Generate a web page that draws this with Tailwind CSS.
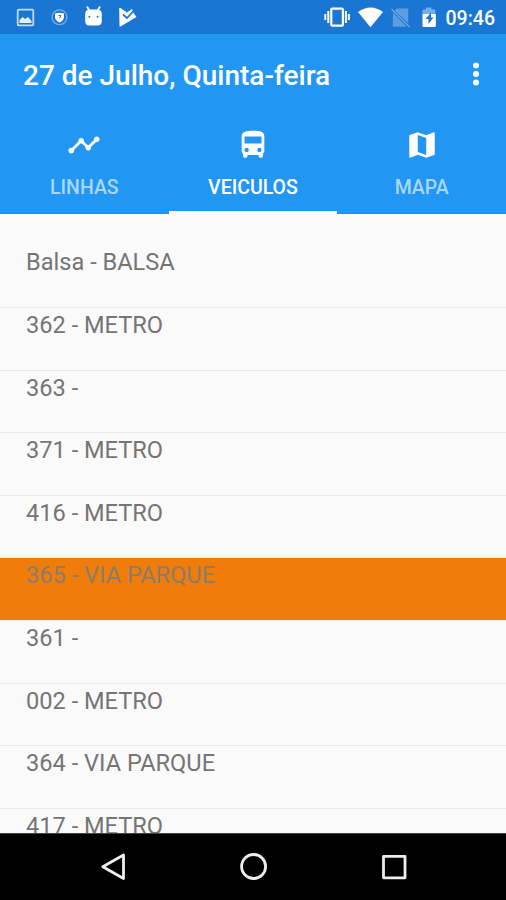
<!DOCTYPE html>
<html lang="pt"><head><meta charset="utf-8"><title>Veiculos</title>
<script src="https://cdn.jsdelivr.net/npm/@tailwindcss/browser@4"></script></head>
<body class="bg-[#fafafa]">
<div class="w-[506px] h-[900px] flex flex-col overflow-hidden font-[Roboto,sans-serif]">
<header class="h-[34px] shrink-0 bg-[#1976d2] flex items-center justify-between text-white">
<svg class="w-[160px] h-[34px]" viewBox="0 0 160 34" fill="none">
<g opacity=".9"><rect x="17.700" y="9.700" width="15.600" height="15.600" rx="1" stroke="#d5e5f8" stroke-width="1.800"/><path d="M19.500 23v-3l3-3 2.500 2 3-2 3.500 4v2z" fill="#fff"/></g>
<circle cx="59.500" cy="17.300" r="7.400" stroke="#77aee8" stroke-width="1.300"/><path d="M55 13.500q4.500-1.500 9 0v4q-.7 3.500-4.500 5-3.800-1.500-4.500-5z" fill="#fff"/><path d="M58.500 15.500h2.500l-1.500 3" stroke="#1976d2"/>
<path d="M87 6.500l3 5M100 6.500l-3 5" stroke="#fff" stroke-width="1.800"/><path d="M85.200 14q0-4.500 4.500-4.500h7.600q4.500 0 4.500 4.500v7q0 4.500-4.500 4.500h-7.600q-4.500 0-4.500-4.500z" fill="#fff"/><circle cx="89.400" cy="16.800" r="1" fill="#1976d2"/><circle cx="97.600" cy="16.800" r="1" fill="#1976d2"/>
<path d="M119.200 8.500q.2-1 1.300-.5l6.500 4.500 5-3.500 1.500 4 3 4-16 9.500q-1 .5-1-.7z" fill="#fff"/><path d="M123 14.500l4 3.500 7-7.500" stroke="#1976d2" stroke-width="1.700"/>
</svg>
<div class="flex items-center"><svg class="w-[122px] h-[34px]" viewBox="322 0 122 34" fill="none">
<rect x="331.300" y="8.700" width="11.600" height="17" rx="1" stroke="#fff" stroke-width="2.200"/><path d="M328.300 11v12M345.900 11v12" stroke="#fff" stroke-width="2"/><path d="M325.300 14v6M348.900 14v6" stroke="#fff" stroke-width="2"/>
<path d="M358 12q12.500-9 25 0L370.500 27.300z" fill="#fff"/>
<path d="M397 8.500h10q1.300 0 1.300 1.300v13.500L394.500 10.500zM393 12.500l13.500 14.200H393.800q-1 0-1-1z" fill="#5d9ee2"/><path d="M391.500 9l18 18" stroke="#70aae6" stroke-width="1.300"/>
<path d="M422.500 15V10.500q0-1 1-1h2.500V7.500h5.500v2h2.500q1.300 0 1.300 1V15z" fill="#76aeea"/><path d="M422.500 14h13.300v11.800q0 1.200-1.200 1.200h-10.900q-1.200 0-1.200-1.200z" fill="#fff"/><path d="M431 12.500l-5.500 6.500h3v5l5-6.500h-2.500z" fill="#1976d2"/>
</svg><span class="w-[62px] text-[19.500px] leading-[34px] font-medium whitespace-nowrap pt-[3px] pl-[1.500px]">09:46</span></div>
</header>
<section class="h-[180px] shrink-0 bg-[#2196f3] text-white flex flex-col">
<div class="h-[80px] flex items-center justify-between pl-[23px] pr-[25px] pt-[3px]">
<h1 class="text-[28px] leading-[32px] font-medium whitespace-nowrap">27 de Julho, Quinta-feira</h1>
<svg class="w-[10px] h-[26px] -mt-[4px]" viewBox="0 0 10 26" fill="#fff"><circle cx="5" cy="4.500" r="3"/><circle cx="5" cy="13" r="3"/><circle cx="5" cy="21.500" r="3"/></svg>
</div>
<nav class="grid grid-cols-3 h-[100px] text-[19.500px] leading-[22px] font-medium text-center">
<div class="flex flex-col items-center pt-[14px] border-b border-[#1e8dea]"><svg class="w-[34px] h-[34px] mb-[15px]" viewBox="0 0 24 24" fill="#fff"><path d="M23 8c0 1.100-.9 2-2 2-.18 0-.35-.02-.51-.07l-3.560 3.550c.05.16.07.34.07.52 0 1.100-.9 2-2 2s-2-.9-2-2c0-.18.02-.36.07-.52l-2.550-2.550c-.16.05-.34.07-.52.07s-.36-.02-.52-.07l-4.550 4.560c.05.16.07.33.07.51 0 1.100-.9 2-2 2s-2-.9-2-2 .9-2 2-2c.18 0 .35.02.51.07l4.560-4.550C8.020 9.360 8 9.180 8 9c0-1.100.9-2 2-2s2 .9 2 2c0 .18-.02.36-.07.52l2.550 2.550c.16-.05.34-.07.52-.07s.36.02.52.07l3.550-3.560C19.020 8.350 19 8.180 19 8c0-1.100.9-2 2-2s2 .9 2 2z"/></svg><span class="text-[#a9d6fb]">LINHAS</span></div>
<div class="flex flex-col items-center pt-[14px] border-b-[3px] border-[#fafafa]"><svg class="w-[34px] h-[34px] mb-[15px]" viewBox="0 0 24 24" fill="#fff"><path d="M4 16c0 .88.39 1.670 1 2.220V20c0 .55.45 1 1 1h1c.55 0 1-.45 1-1v-1h8v1c0 .55.45 1 1 1h1c.55 0 1-.45 1-1v-1.780c.61-.55 1-1.340 1-2.220V6c0-3.500-3.580-4-8-4s-8 .5-8 4v10zm3.500 1c-.83 0-1.500-.67-1.500-1.500S6.670 14 7.500 14s1.500.67 1.500 1.500S8.330 17 7.500 17zm9 0c-.83 0-1.500-.67-1.500-1.500s.67-1.500 1.500-1.500 1.500.67 1.500 1.500-.67 1.500-1.500 1.500zm1.500-6H6V6h12v5z"/></svg><span>VEICULOS</span></div>
<div class="flex flex-col items-center pt-[14px] border-b border-[#1e8dea]"><svg class="w-[34px] h-[34px] mb-[15px]" viewBox="0 0 24 24" fill="#fff"><path d="M20.500 3l-.16.03L15 5.100 9 3 3.360 4.900c-.21.07-.36.25-.36.48V20.500c0 .28.22.5.5.5l.16-.03L9 18.900l6 2.100 5.640-1.900c.21-.07.36-.25.36-.48V3.500c0-.28-.22-.5-.5-.5zM15 19l-6-2.110V5l6 2.110V19z"/></svg><span class="text-[#a9d6fb]">MAPA</span></div>
</nav>
</section>
<main class="flex-1 min-h-0 overflow-hidden bg-[#fafafa] text-[#757575] text-[23.600px] leading-[28px] whitespace-nowrap">
<div class="h-[94px] pt-[34px] pl-[26px] border-b border-[#e8e8e8]">Balsa - BALSA</div>
<div class="h-[62.600px] pt-[3px] pl-[26px] border-b border-[#e8e8e8]">362 - METRO</div>
<div class="h-[62.600px] pt-[3px] pl-[26px] border-b border-[#e8e8e8]">363 -</div>
<div class="h-[62.600px] pt-[3px] pl-[26px] border-b border-[#e8e8e8]">371 - METRO</div>
<div class="h-[62.600px] pt-[3px] pl-[26px] border-b border-[#e8e8e8]">416 - METRO</div>
<div class="h-[62.600px] pt-[3px] pl-[26px] border-b border-[#e8e8e8] bg-[#f07c0a] text-[#8b7d6d]">365 - VIA PARQUE</div>
<div class="h-[62.600px] pt-[3px] pl-[26px] border-b border-[#e8e8e8]">361 -</div>
<div class="h-[62.600px] pt-[3px] pl-[26px] border-b border-[#e8e8e8]">002 - METRO</div>
<div class="h-[62.600px] pt-[3px] pl-[26px] border-b border-[#e8e8e8]">364 - VIA PARQUE</div>
<div class="h-[62.600px] pt-[3px] pl-[26px]">417 - METRO</div>
</main>
<footer class="h-[67px] shrink-0 bg-black border-t border-[#444] flex justify-center">
<svg class="w-[506px] h-[66px]" viewBox="0 834 506 66" fill="none" stroke="#eee" stroke-width="2.800" stroke-linejoin="round"><path d="M123.500 855v23.500L102.800 866.700z"/><circle cx="253.600" cy="866.500" r="12"/><rect x="383.500" y="856.300" width="21.500" height="21.500"/></svg>
</footer>
</div></body></html>
